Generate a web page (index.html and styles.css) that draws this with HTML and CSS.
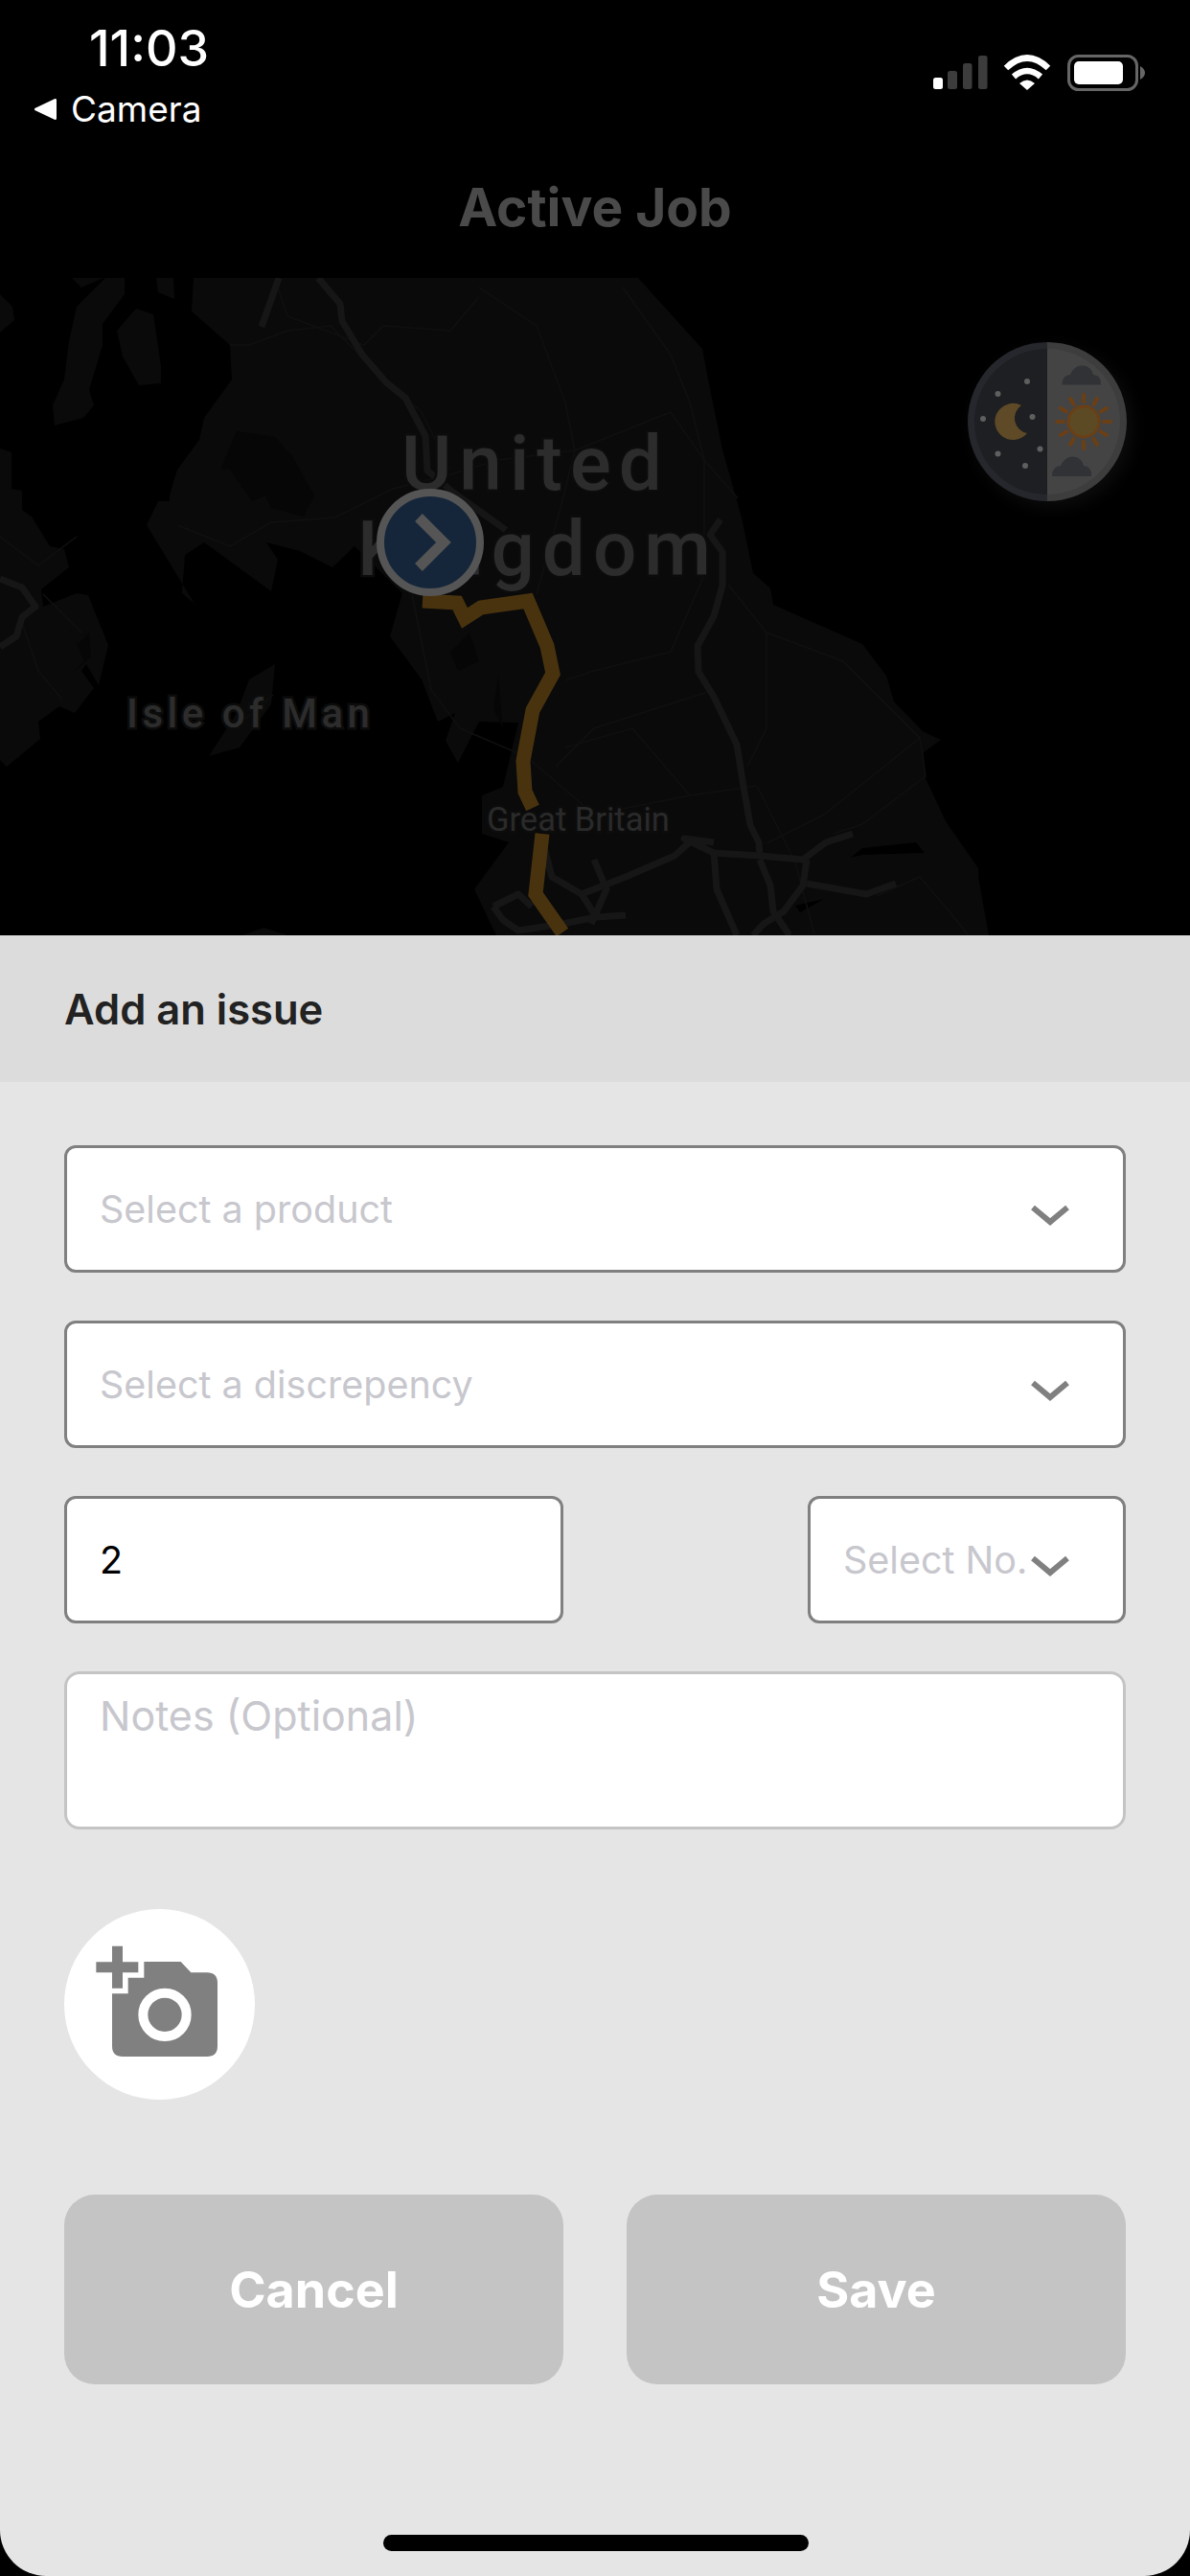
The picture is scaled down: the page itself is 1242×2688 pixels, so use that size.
FILE: index.html
```html
<!DOCTYPE html>
<html lang="en">
<head>
    <meta charset="UTF-8">
    <meta name="viewport" content="width=device-width, initial-scale=1.0">
    <title>Active Job</title>
    <link rel="stylesheet" href="styles.css">
</head>
<body>
    <div class="top-bar">
        <div class="status">
            <div>
                <div class="time">11:03</div>
                <div class="back">
                    <svg class="back-arrow" viewBox="0 0 23 22"><path d="M21.500 1.500V20.500L1.500 11Z" fill="#fff" stroke="#fff" stroke-width="3" stroke-linejoin="round"/></svg>
                    <span>Camera</span>
                </div>
            </div>
            <svg class="status-icons" viewBox="974 57 222 38">
                <rect x="974" y="81" width="10" height="12" rx="2.500" fill="#fff"/>
                <rect x="989" y="74" width="10" height="19" rx="2.500" fill="#3c3c3c"/>
                <rect x="1005" y="66" width="9.500" height="27" rx="2.500" fill="#3c3c3c"/>
                <rect x="1021" y="58" width="9.500" height="35" rx="2.500" fill="#3c3c3c"/>
                <path d="M1050 71Q1072 50 1094 71" fill="none" stroke="#fff" stroke-width="6.500"/>
                <path d="M1058 80Q1072 68 1086 80" fill="none" stroke="#fff" stroke-width="6.500"/>
                <path d="M1064 87Q1072 80 1080 87L1072 94Z" fill="#fff"/>
                <rect x="1115.500" y="58.500" width="71" height="35" rx="10" fill="none" stroke="#666" stroke-width="3"/>
                <rect x="1121" y="64" width="51" height="24" rx="5" fill="#fff"/>
                <path d="M1190 69Q1195 72 1195 76Q1195 80 1190 83Z" fill="#666"/>
            </svg>
        </div>
        <div class="page-title">Active Job</div>
    </div>

    <div class="map">
        <!-- coordinates below are page pixels, map starts at y=290 -->
        <svg class="map-canvas" viewBox="0 290 1242 686">
            <g class="land">
                <path d="M202 290L200 325 240 360 242 396 213 436 208 459 185 490 177 517 177 523 165 523 153 548 203 630 190 619 193 579 213 566 283 617 290 584 278 566 313 575 347 592 370 570 420 619 407 664 440 709 457 753 475 744 465 773 478 796 500 753 541 754 525 821 503 830 503 870 531 879 495 928 518 976H1032L1021 915 1021 906 987 857 966 812 964 785 982 772 963 763 933 732 925 705 900 672 807 631 804 614 786 598 774 540 754 469 741 406 733 364 666 290Z"/>
                <path d="M110 290H130V307L107 338 107 360 93 407 98 423 87 436 57 444 55 423 67 396 72 356 80 320Z"/>
                <path d="M142 322L160 328 168 382 168 400 145 402 128 372 122 345Z"/>
                <path d="M163 290H181L182 312 165 305Z"/>
                <path d="M75 290H108L85 300Z"/>
                <path d="M0 307L13 320 15 334 0 347Z"/>
                <path d="M0 468L12 472 12 510 23 512 23 532 33 539 52 570 67 573 72 592 43 615 45 633 80 619 92 621 113 673 103 715 90 693 85 700 98 718 78 744 62 737 40 753 42 771 7 800 0 793Z"/>
                <path d="M287 693L260 709 247 744 218 789 250 780 283 735Z"/>
                <path d="M253 976L275 968 300 976Z"/>
            </g>
            <g class="patch">
                <path d="M230 490L247 450 287 456 305 476 328 517 317 539 283 530 277 517 263 523 240 490Z"/>
                <path d="M70 650L80 673 93 660 95 686 73 704 88 690Z"/>
                <path d="M490 660L500 690 478 700 470 680Z"/>
                <path d="M520 705L525 760 515 740Z"/>
                <path class="water" d="M888 895L900 885 956 879 965 890 900 892Z"/>
                <path class="water" d="M830 945L860 938 835 952Z"/>
            </g>
            <g class="minor">
                <path d="M290 300L300 330 380 360 400 340 470 345 500 310"/>
                <path d="M240 360L260 360 300 345 345 340 400 395 440 430 470 490"/>
                <path d="M185 548L240 570 283 545 350 540 410 510 470 495 520 480 600 470 700 430 735 480 770 520"/>
                <path d="M500 300L560 340 590 420 600 470 585 530 560 620"/>
                <path d="M650 300L700 370 720 420 735 480 735 600 700 680 620 700 590 710"/>
                <path d="M0 560L40 590 80 560M23 650L40 700 65 730M45 620L85 660"/>
                <path d="M430 620L450 720 480 760 550 790 620 850 720 830 790 820"/>
                <path d="M760 610L800 660 800 760 780 800M800 660L880 690 960 770 860 850 800 880"/>
                <path d="M745 720L620 760 580 800M790 820L830 900 850 975M960 770L966 810 900 860 870 870"/>
                <path d="M256 750L285 725M915 935L960 915 990 950 1010 975M590 780L660 760 720 830"/>
            </g>
            <g class="road">
                <path d="M291 290L273 341"/>
                <path d="M332 290L355 317 357 335 378 370 403 399 423 415 444 455 446 491 472 513 528 553"/>
                <path d="M752 542L741 558 754 576 754 611 745 643 728 674 729 701 745 727 769 777 776 821 783 861 792 879 793 893 745 890 714 875 745 879"/>
                <path d="M793 893L838 897 862 879 890 870"/>
                <path d="M842 897L838 924 818 951 797 964 786 976"/>
                <path d="M842 922L904 933 935 922"/>
                <path d="M745 888L748 928 769 976"/>
                <path d="M793 897L804 924 807 951 824 976"/>
                <path d="M569 888L576 915 607 933 653 915 704 893 724 875"/>
                <path d="M607 933L622 957 653 955M620 897L633 928 617 964"/>
                <path d="M515 946L541 933 555 946M515 946L525 960 541 971 587 964 622 957"/>
                <path d="M0 604L23 613 37 633 23 644 17 664 0 675"/>
            </g>
            <path class="route" d="M441 627L477 629 485 645 502 634 551 627 571 674 577 703 556 741 546 794 548 826 556 843"/>
            <path class="route" d="M566 870L559 933 587 973"/>
            <text class="map-label country" x="419" y="511">United</text>
            <text class="map-label country" x="373" y="600">Kingdom</text>
            <text class="map-label island" x="132" y="759">Isle of Man</text>
            <text class="map-label region" x="508" y="867">Great Britain</text>
        </svg>

        <div class="marker">
            <svg viewBox="0 0 96 96"><path d="M36 22L62 48 36 74" fill="none" stroke="#555" stroke-width="11"/></svg>
        </div>

        <div class="mode-toggle">
            <svg viewBox="1010 357 166 166">
                <path d="M1093 357A83 83 0 0 0 1093 523Z" fill="#25272c"/>
                <path d="M1093 364A76 76 0 0 0 1093 516Z" fill="#1e1f23"/>
                <path d="M1093 357A83 83 0 0 1 1093 523Z" fill="#3d3d3d"/>
                <path d="M1093 364A76 76 0 0 1 1093 516Z" fill="#444"/>
                <g fill="#5f5f5f">
                    <circle cx="1072" cy="398" r="3"/>
                    <circle cx="1041.500" cy="411" r="3"/>
                    <circle cx="1026" cy="437" r="3"/>
                    <circle cx="1077.500" cy="435" r="3"/>
                    <circle cx="1085.500" cy="468.500" r="3"/>
                    <circle cx="1041.500" cy="473.500" r="3"/>
                    <circle cx="1070" cy="486" r="3"/>
                </g>
                <path d="M1066 423A19 19 0 1 0 1072 452A16 16 0 0 1 1066 423Z" fill="#5e4a26"/>
                <g fill="#303236">
                    <path d="M1108.500 401.500Q1108 392 1117 391Q1121 381 1130 381.500Q1139 382 1141 391Q1150 392 1149 401.500Z"/>
                    <path d="M1098 497Q1097.500 487 1107 486Q1111 476.500 1120 476.500Q1129 477 1131 486Q1140 487 1139 497Z"/>
                </g>
                <circle cx="1131" cy="440" r="16" fill="#5c4a24" stroke="#6b3f15" stroke-width="3"/>
                <g stroke="#6b3f15" stroke-width="4" stroke-linecap="round">
                    <path d="M1131 412V419M1131 461V468M1103 440H1110M1152 440H1159"/>
                    <path d="M1117 416L1120.500 422M1141.500 458L1145 464M1107 426L1113 429.500M1149 450.500L1155 454"/>
                    <path d="M1145 416L1141.500 422M1120.500 458L1117 464M1155 426L1149 429.500M1113 450.500L1107 454"/>
                </g>
            </svg>
        </div>
    </div>

    <div class="sheet">
        <div class="sheet-head">Add an issue</div>
        <div class="form">
            <div class="field">
                <span class="placeholder">Select a product</span>
                <svg class="chevron" viewBox="0 0 40 24"><path d="M2 3L20 18 38 3" fill="none" stroke="#808080" stroke-width="6"/></svg>
            </div>
            <div class="field">
                <span class="placeholder">Select a discrepency</span>
                <svg class="chevron" viewBox="0 0 40 24"><path d="M2 3L20 18 38 3" fill="none" stroke="#808080" stroke-width="6"/></svg>
            </div>
            <div class="form-row">
                <div class="field field-half"><span class="value">2</span></div>
                <div class="field field-small">
                    <span class="placeholder">Select No.</span>
                    <svg class="chevron" viewBox="0 0 40 24"><path d="M2 3L20 18 38 3" fill="none" stroke="#808080" stroke-width="6"/></svg>
                </div>
            </div>
            <div class="notes"><span class="placeholder">Notes (Optional)</span></div>

            <div class="photo-btn">
                <svg viewBox="78 98 597 597">
                    <path d="M228 363H278V313H328V263H443L475 297H525Q558 297 558 330V527Q558 560 525 560H261Q228 560 228 527Z" fill="#808080"/>
                    <path d="M228 214H261V264H310V297H261V346H228V297H178V264H228Z" fill="#808080"/>
                    <circle cx="393" cy="429" r="68" fill="none" stroke="#fff" stroke-width="30"/>
                </svg>
            </div>

            <div class="actions">
                <button>Cancel</button>
                <button>Save</button>
            </div>
        </div>
        <div class="home-bar"></div>
    </div>
</body>
</html>
```
FILE: styles.css
```css
body {
    margin: 0;
    width: 1242px;
    height: 2688px;
    overflow: hidden;
    background-color: #000;
    font-family: Inter, "Liberation Sans", sans-serif;
}
.top-bar {
    height: 290px;
}
.status {
    display: flex;
    justify-content: space-between;
    padding: 21px 46px 0 36px;
}
.time {
    margin-left: 57px;
    color: #fff;
    font-size: 52px;
    font-weight: 500;
    line-height: 60px;
}
.back {
    display: flex;
    align-items: center;
    gap: 15px;
    margin-top: 11px;
    color: #fff;
    font-size: 37px;
    line-height: 44px;
}
.back-arrow {
    width: 23px;
    height: 22px;
}
.status-icons {
    width: 222px;
    height: 38px;
    margin-top: 36px;
}
.page-title {
    margin-top: 47px;
    color: #4a4a4a;
    font-size: 55px;
    font-weight: 700;
    line-height: 66px;
    text-align: center;
}
.map {
    position: relative;
    height: 686px;
}
.map-canvas {
    display: block;
    width: 1242px;
    height: 686px;
}
.land path {
    fill: #0a0a0a;
}
.patch path {
    fill: #060606;
}
.patch .water {
    fill: #000;
}
.minor path {
    fill: none;
    stroke: #101010;
    stroke-width: 1.5;
}
.road path {
    fill: none;
    stroke: #161616;
    stroke-width: 7;
    stroke-linejoin: round;
}
.route {
    fill: none;
    stroke: #49330f;
    stroke-width: 15;
}
.map-label {
    font-family: Roboto, sans-serif;
    fill: #2c2c2c;
    stroke: #0c0c0c;
    stroke-width: 5px;
    paint-order: stroke;
}
.country {
    font-size: 80px;
    font-weight: 500;
    letter-spacing: 8px;
}
.island {
    font-size: 42px;
    font-weight: 500;
    letter-spacing: 4.5px;
}
.region {
    font-size: 34.500px;
    font-weight: 400;
    fill: #2a2a2a;
}
.marker {
    position: absolute;
    left: 393px;
    top: 220px;
    box-sizing: border-box;
    width: 112px;
    height: 112px;
    border: 8px solid #555;
    border-radius: 50%;
    background-color: #16263a;
}
.marker svg {
    display: block;
}
.mode-toggle {
    position: absolute;
    left: 1010px;
    top: 67px;
    width: 166px;
    height: 166px;
    border-radius: 50%;
    box-shadow: 6px 6px 18px rgba(14, 14, 14, 0.9);
}
.mode-toggle svg {
    display: block;
}
.sheet {
    position: relative;
    height: 1712px;
    overflow: hidden;
    border-radius: 0 0 48px 48px;
    background-color: #e5e5e5;
}
.sheet-head {
    display: flex;
    align-items: center;
    height: 153px;
    padding-left: 67px;
    background-color: #dcdcdc;
    color: #222;
    font-size: 43.500px;
    font-weight: 600;
}
.form {
    display: flex;
    flex-direction: column;
    gap: 50px;
    padding: 66px 67px 0;
}
.form-row {
    display: flex;
    justify-content: space-between;
}
.field {
    position: relative;
    box-sizing: border-box;
    display: flex;
    align-items: center;
    height: 133px;
    padding-left: 34px;
    border: 3px solid #808080;
    border-radius: 12px;
    background-color: #fff;
    font-size: 39.500px;
}
.field-half {
    width: 521px;
}
.field-small {
    width: 332px;
}
.placeholder {
    color: #c7c7cd;
}
.value {
    color: #000;
}
.chevron {
    position: absolute;
    right: 56px;
    top: 59px;
    width: 40px;
    height: 24px;
}
.notes {
    box-sizing: border-box;
    height: 165px;
    padding: 17px 34px 0;
    border: 3px solid #c4c4c4;
    border-radius: 16px;
    background-color: #fff;
    font-size: 43px;
}
.photo-btn {
    width: 199px;
    height: 199px;
    margin-top: 33px;
    border-radius: 50%;
    background-color: #fff;
}
.photo-btn svg {
    display: block;
}
.actions {
    display: grid;
    grid-template-columns: 1fr 1fr;
    gap: 66px;
    margin-top: 49px;
}
.actions button {
    height: 198px;
    border: none;
    border-radius: 32px;
    background-color: #c4c4c4;
    color: #fff;
    font-family: Inter, "Liberation Sans", sans-serif;
    font-size: 52px;
    font-weight: 700;
}
.home-bar {
    position: absolute;
    left: 400px;
    bottom: 26px;
    width: 444px;
    height: 17px;
    border-radius: 9px;
    background-color: #000;
}
```
